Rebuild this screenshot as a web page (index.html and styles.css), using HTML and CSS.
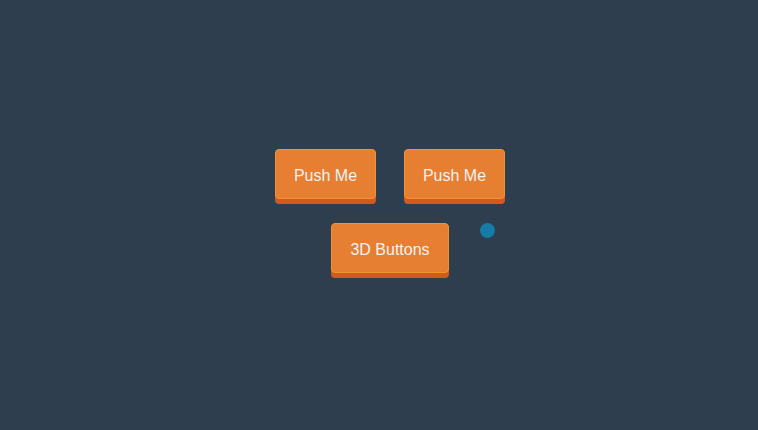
FILE: index.html
```html
<!DOCTYPE html>
<html>
<head>
<meta charset="utf-8">
<link rel="stylesheet" href="styles.css">
</head>
<body>
<div class="stage">
  <div class="row">
    <button class="btn">Push Me</button>
    <button class="btn">Push Me</button>
  </div>
  <div class="row row2">
    <button class="btn wide">3D Buttons</button>
  </div>
  <span class="dot"></span>
</div>
</body>
</html>
```
FILE: styles.css
```css
html, body {
  margin: 0;
  padding: 0;
  background: #2e3e4f;
}
.stage {
  position: relative;
  height: 430px;
  box-sizing: border-box;
  display: flex;
  flex-direction: column;
  align-items: center;
  padding-top: 149px;
  padding-left: 22px;
}
.row {
  display: flex;
  gap: 28px;
}
.row2 {
  margin-top: 24px;
}
.btn {
  width: 101px;
  height: 50px;
  box-sizing: border-box;
  background: #e67f31;
  border: 1px solid #f0952b;
  border-radius: 4px;
  box-shadow: 0 5px 0 #d25a1c;
  color: #f2f2f2;
  font-family: "Liberation Sans", Arial, sans-serif;
  font-size: 16px;
  padding: 3px 0 0 0;
  cursor: pointer;
}
.wide {
  width: 118px;
}
.dot {
  position: absolute;
  left: 480px;
  top: 223px;
  width: 15px;
  height: 15px;
  border-radius: 50%;
  background: #167ba6;
}
```
